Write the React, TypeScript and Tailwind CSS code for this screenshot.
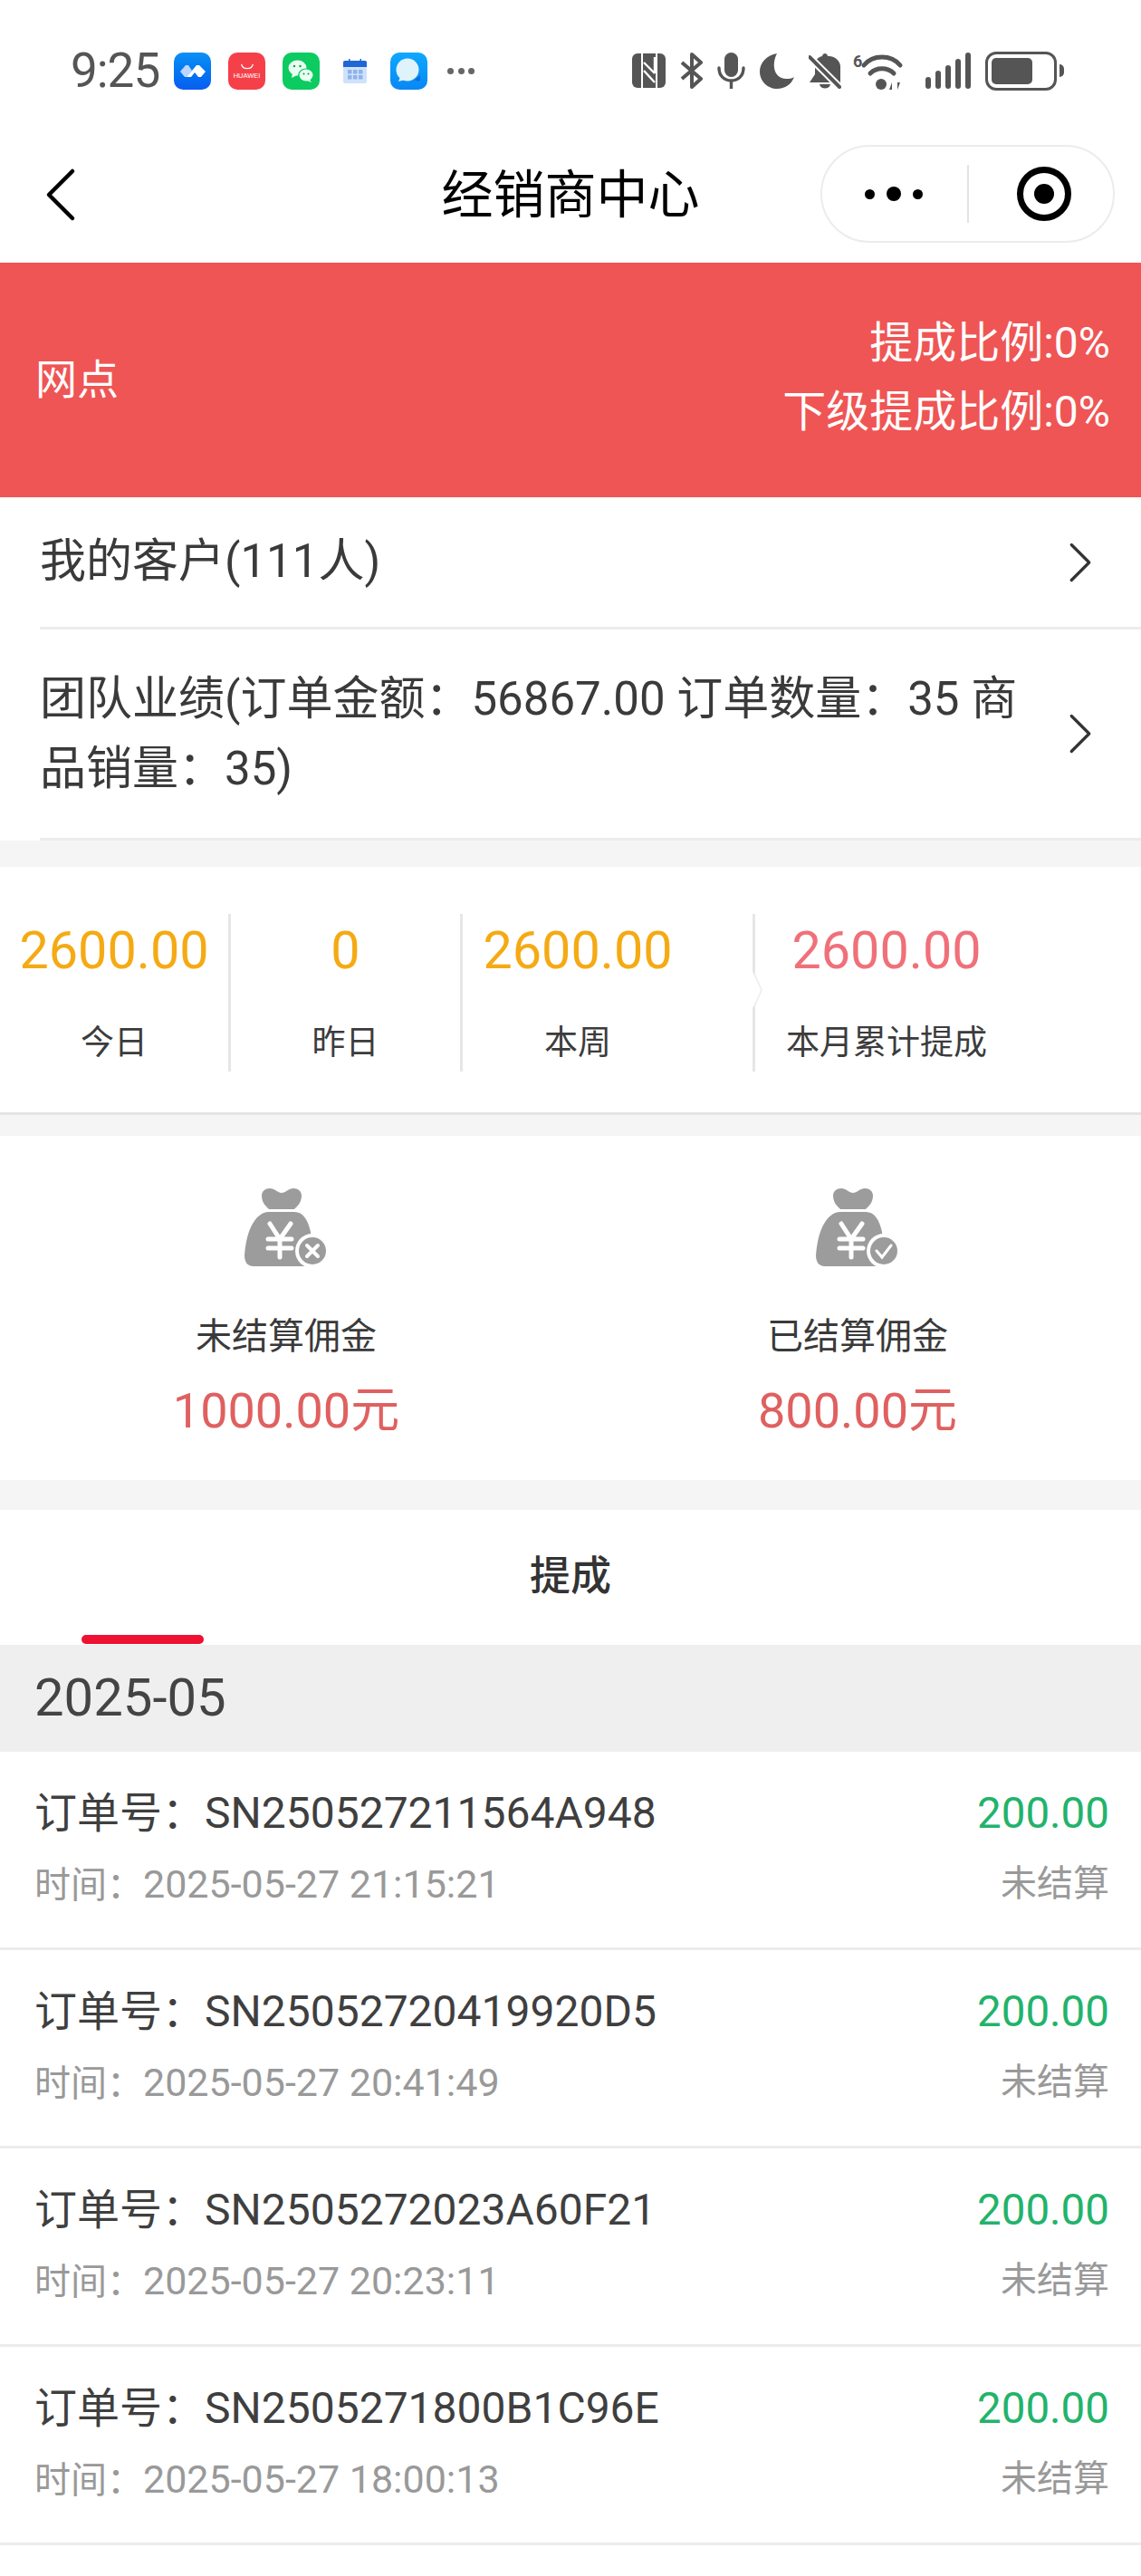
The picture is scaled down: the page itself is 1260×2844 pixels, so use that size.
import { ChevronLeft, ChevronRight } from "lucide-react";

const orders = [
  { no: "SN250527211564A948", time: "2025-05-27 21:15:21" },
  { no: "SN25052720419920D5", time: "2025-05-27 20:41:49" },
  { no: "SN2505272023A60F21", time: "2025-05-27 20:23:11" },
  { no: "SN2505271800B1C96E", time: "2025-05-27 18:00:13" },
];

function AppIcon({ className, children }: { className: string; children?: React.ReactNode }) {
  return (
    <div className={`flex h-[41px] w-[41px] shrink-0 items-center justify-center overflow-hidden rounded-[10px] ${className}`}>
      {children}
    </div>
  );
}

function StatusBar() {
  return (
    <div className="flex h-[140px] items-center pt-[16px] text-[#555]">
      <div className="ml-[78px] w-[100px] text-[53px] leading-none tracking-[-1px]">9:25</div>
      <AppIcon className="ml-[14px] bg-gradient-to-b from-[#0f90f5] to-[#0a5cf0]">
        <svg viewBox="0 0 41 41" className="h-full w-full">
          <path d="M7 21l6-7h3l4 6-6 7h-2z" fill="#bcd6ff" />
          <path d="M14 27l6-7 5-6h3l7 7-5 6h-3l-4-5-4 5z" fill="#fff" />
        </svg>
      </AppIcon>
      <AppIcon className="ml-[19px] flex-col bg-[#f5404a] text-white">
        <svg viewBox="0 0 20 8" className="h-[9px] w-[18px]">
          <path d="M3 1c1 7 13 7 14 0" fill="none" stroke="#fff" strokeWidth="1.4" />
        </svg>
        <span className="mt-[2px] font-['Liberation_Sans',sans-serif] text-[7.5px] leading-none">HUAWEI</span>
      </AppIcon>
      <AppIcon className="ml-[19px] bg-[#0ccb60]">
        <svg viewBox="0 0 41 41" className="h-full w-full">
          <ellipse cx="16.500" cy="17" rx="10" ry="8.500" fill="#e8fff1" />
          <path d="M11 23l-1 5 6-3z" fill="#e8fff1" />
          <ellipse cx="26" cy="25" rx="9" ry="7.500" fill="#0ccb60" />
          <ellipse cx="26" cy="25" rx="7.500" ry="6.500" fill="#e8fff1" />
          <path d="M30 30l2 3-5-2z" fill="#e8fff1" />
          <circle cx="13" cy="15" r="1.200" fill="#0a9a4a" />
          <circle cx="19.500" cy="15" r="1.200" fill="#0a9a4a" />
          <circle cx="23.500" cy="23.500" r="1" fill="#0a9a4a" />
          <circle cx="28.500" cy="23.500" r="1" fill="#0a9a4a" />
        </svg>
      </AppIcon>
      <svg viewBox="0 0 26 27" className="ml-[26px] h-[27px] w-[26px] shrink-0">
        <rect x="0" y="2" width="26" height="25" rx="2" fill="#cfe2fb" />
        <path d="M0 4a2 2 0 012-2h22a2 2 0 012 2v5H0z" fill="#1f66d6" />
        <rect x="6" y="0" width="1.500" height="4" fill="#1f66d6" />
        <rect x="18.500" y="0" width="1.500" height="4" fill="#1f66d6" />
        {[5, 11, 17].map((x) =>
          [12, 18].map((y) => <rect key={`${x}-${y}`} x={x} y={y} width="4.500" height="4.500" fill="#8fb2ea" />)
        )}
      </svg>
      <AppIcon className="ml-[26px] bg-gradient-to-b from-[#10a8ff] to-[#0a87f5]">
        <svg viewBox="0 0 41 41" className="h-full w-full">
          <path d="M33 31c-3 1-5 0-6-1l6-5z" fill="#0b6fd8" />
          <circle cx="19" cy="19" r="12.500" fill="#dff3fb" />
          <path d="M11 27l-2 5 7-2z" fill="#dff3fb" />
        </svg>
      </AppIcon>
      <div className="ml-[22px] flex w-[30px] shrink-0 justify-between">
        <span className="h-[7px] w-[7px] rounded-full bg-[#666]" />
        <span className="h-[7px] w-[7px] rounded-full bg-[#666]" />
        <span className="h-[7px] w-[7px] rounded-full bg-[#666]" />
      </div>

      <svg viewBox="0 0 37 38" className="ml-[174px] h-[38px] w-[37px] shrink-0">
        <rect width="37" height="38" rx="6" fill="#555" />
        <path d="M11 0v38M27 0v38" stroke="#fff" strokeWidth="2" />
        <path d="M13 10l12 12M13 19l12 13M25 4v18" stroke="#fff" strokeWidth="2.400" fill="none" />
      </svg>
      <svg viewBox="0 0 25 40" className="ml-[16px] h-[40px] w-[25px] shrink-0">
        <path d="M2 11l21 18-10 9V2l10 9L2 29" fill="none" stroke="#555" strokeWidth="4" strokeLinejoin="round" />
      </svg>
      <svg viewBox="0 0 31 40" className="ml-[16px] h-[40px] w-[31px] shrink-0">
        <rect x="8" y="0" width="15" height="27" rx="7.500" fill="#555" />
        <path d="M2 17c0 9 6 14 13.500 14S29 26 29 17M15.500 31v9" fill="none" stroke="#555" strokeWidth="3.400" strokeLinecap="round" />
      </svg>
      <svg viewBox="0 0 38 40" className="ml-[16px] h-[40px] w-[38px] shrink-0">
        <path d="M19 1C8 3 0 11 0 21c0 11 9 19 19 19 9 0 16-5 19-13-3 2-6 2-9 2C17 29 12 15 19 1z" fill="#555" />
      </svg>
      <svg viewBox="0 0 36 40" className="ml-[16px] h-[40px] w-[36px] shrink-0">
        <path d="M18 1c-1 0-3 1-3 3-5 1-8 5-8 10v10l-6 9h34V15C35 9 28 3 21 4c0-2-2-3-3-3z" fill="#555" />
        <path d="M12 35h12c-1 6-11 6-12 0z" fill="#555" />
        <path d="M0 4l34 34" stroke="#fff" strokeWidth="8" />
        <path d="M1 5l33 33" stroke="#555" strokeWidth="4" strokeLinecap="round" />
      </svg>
      <svg viewBox="0 0 57 43" className="ml-[13px] h-[43px] w-[57px] shrink-0">
        <text x="0" y="17" fontSize="18" fontWeight="700" fill="#555" fontFamily="Roboto, sans-serif">6</text>
        <path d="M12 15c10-12 30-12 40 0M19 24c7-7 19-7 26 0" fill="none" stroke="#555" strokeWidth="5" strokeLinecap="round" />
        <circle cx="31" cy="36" r="6" fill="#555" />
        <path d="M43 42v-8l-3 8zM49 34v8l3-8z" fill="#555" />
      </svg>
      <div className="ml-[23px] flex h-[40px] w-[50px] shrink-0 items-end justify-between">
        <span className="h-[13px] w-[6px] rounded-full bg-[#555]" />
        <span className="h-[20px] w-[6px] rounded-full bg-[#555]" />
        <span className="h-[26px] w-[6px] rounded-full bg-[#555]" />
        <span className="h-[33px] w-[6px] rounded-full bg-[#555]" />
        <span className="h-[40px] w-[6px] rounded-full bg-[#555]" />
      </div>
      <div className="ml-[16px] flex shrink-0 items-center">
        <div className="h-[43px] w-[79px] rounded-[12px] border-[3px] border-[#555] p-[4px]">
          <div className="h-full w-[45px] rounded-[5px] bg-[#555]" />
        </div>
        <div className="ml-[3px] h-[14px] w-[5px] rounded-r-full bg-[#555]" />
      </div>
    </div>
  );
}

function NavBar() {
  return (
    <div className="relative flex h-[150px] items-center">
      <ChevronLeft className="ml-[15px] h-[104px] w-[104px] text-black" strokeWidth={1.05} />
      <div className="absolute left-0 right-0 text-center text-[57px] leading-none text-black">经销商中心</div>
      <div className="absolute left-[906px] top-[20px] flex h-[108px] w-[325px] items-center rounded-full border-2 border-[#ececec]">
        <div className="ml-[47px] flex w-[64px] items-center justify-between">
          <span className="h-[11px] w-[11px] rounded-full bg-black" />
          <span className="h-[16px] w-[16px] rounded-full bg-black" />
          <span className="h-[11px] w-[11px] rounded-full bg-black" />
        </div>
        <div className="ml-[49px] h-[64px] w-[2px] bg-[#e3e3e3]" />
        <div className="ml-[53px] flex h-[60px] w-[60px] items-center justify-center rounded-full border-[7px] border-black">
          <span className="h-[22px] w-[22px] rounded-full bg-black" />
        </div>
      </div>
    </div>
  );
}

function Bag({ done }: { done?: boolean }) {
  return (
    <svg viewBox="0 0 92 88" className="h-[88px] w-[92px]">
      <path d="M19 8C19 3 23 0 28 0c5 0 9 5 13 5s8-5 13-5c5 0 9 3 9 8 0 8-5 12-8 15H27c-3-3-8-7-8-15z" fill="#9c9c9c" />
      <path d="M27 26h28c10 0 15 9 18 22l3 26c0 8-3 12-9 12H10C3 86 0 81 0 74c1-14 4-27 9-35 4-7 10-13 18-13z" fill="#9c9c9c" />
      <path d="M28 39l11 17 12-17M39 56v20M26 56h26M26 66h26" fill="none" stroke="#fff" strokeWidth="5" strokeLinecap="round" />
      <circle cx="75" cy="69" r="19" fill="#fff" />
      <circle cx="75" cy="69" r="15" fill="#9c9c9c" />
      {done ? (
        <path d="M67 69l6 7 10-13" fill="none" stroke="#fff" strokeWidth="3" strokeLinecap="round" />
      ) : (
        <path d="M69 63l12 12M81 63L69 75" fill="none" stroke="#fff" strokeWidth="4" strokeLinecap="round" />
      )}
    </svg>
  );
}

function Stat({ value, label, className }: { value: string; label: string; className: string }) {
  return (
    <div className={`flex h-[174px] flex-col items-center border-r-[3px] border-[#e6e6e6] ${className}`}>
      <div className="mt-[14px] text-[57.5px] leading-[54px] text-[#f5aa14]">{value}</div>
      <div className="mt-[50px] text-[37px] leading-[50px] text-[#3c3c3c]">{label}</div>
    </div>
  );
}

export default function App() {
  return (
    <div className="h-[2844px] w-[1260px] overflow-hidden bg-white font-['Roboto','Noto_Sans_CJK_SC',sans-serif]">
      <StatusBar />
      <NavBar />

      <div className="flex h-[259px] items-center justify-between bg-[#ef5554] pl-[39px] pr-[34px] text-white">
        <div className="text-[46px]">网点</div>
        <div className="pb-[6px] text-right text-[48px] leading-[76px]">
          <div>提成比例:0%</div>
          <div>下级提成比例:0%</div>
        </div>
      </div>

      <div className="bg-white pl-[44px]">
        <div className="flex h-[146px] items-center justify-between border-b-[3px] border-[#ececec] pr-[28px] text-[51px] text-[#3a3a3a]">
          <span>我的客户(111人)</span>
          <ChevronRight className="h-[78px] w-[78px] text-[#333]" strokeWidth={1} />
        </div>
        <div className="flex h-[233px] items-center justify-between border-b-[3px] border-[#ececec] pr-[28px] text-[51px] leading-[77px] text-[#3a3a3a]">
          <span className="w-[1090px]">团队业绩(订单金额：56867.00 订单数量：35 商品销量：35)</span>
          <ChevronRight className="h-[78px] w-[78px] shrink-0 text-[#333]" strokeWidth={1} />
        </div>
      </div>

      <div className="h-[29px] bg-[#f5f5f5]" />

      <div className="flex h-[274px] items-center border-b-[3px] border-[#e4e4e4] bg-white pt-[6px]">
        <Stat value="2600.00" label="今日" className="w-[255px]" />
        <Stat value="0" label="昨日" className="w-[256px]" />
        <Stat value="2600.00" label="本周" className="w-[323px] pr-[66px]" />
        <div className="relative flex h-[174px] flex-col items-center pl-[34px]">
          <svg viewBox="0 0 12 40" className="absolute left-[-3px] top-[64px] h-[40px] w-[12px]">
            <path d="M0 0l10 20L0 40z" fill="#fff" />
            <path d="M2 2l8 18-8 18" fill="none" stroke="#ececec" strokeWidth="1.500" />
          </svg>
          <div className="mt-[14px] text-[57.5px] leading-[54px] text-[#f0707a]">2600.00</div>
          <div className="mt-[50px] text-[37px] leading-[50px] text-[#3c3c3c]">本月累计提成</div>
        </div>
      </div>

      <div className="h-[23px] bg-[#f5f5f5]" />

      <div className="grid h-[380px] grid-cols-2 bg-white">
        <div className="flex flex-col items-center pl-[2px] pt-[58px]">
          <Bag />
          <div className="mt-[51px] text-[40px] leading-[50px] text-[#3a3a3a]">未结算佣金</div>
          <div className="mt-[30px] text-[54px] leading-[54px] text-[#e06060]">1000.00元</div>
        </div>
        <div className="flex flex-col items-center pl-[4px] pt-[58px]">
          <Bag done />
          <div className="mt-[51px] text-[40px] leading-[50px] text-[#3a3a3a]">已结算佣金</div>
          <div className="mt-[30px] text-[54px] leading-[54px] text-[#e06060]">800.00元</div>
        </div>
      </div>

      <div className="h-[33px] bg-[#f5f5f5]" />

      <div className="h-[149px] bg-white">
        <div className="pt-[44px] text-center text-[45px] font-medium leading-[60px] text-[#333]">提成</div>
        <div className="ml-[90px] mt-[34px] h-[10px] w-[135px] rounded-full bg-[#ee1131]" />
      </div>

      <div className="flex h-[118px] items-center bg-[#efefef] pb-[2px] pl-[38px] text-[58px] text-[#444]">2025-05</div>

      {orders.map((o) => (
        <div key={o.no} className="flex h-[219px] items-start justify-between border-b-[3px] border-[#ececec] bg-white pl-[38px] pr-[35px] pt-[38px]">
          <div>
            <div className="text-[47px] leading-[60px] text-[#3f3f3f]">
              订单号：<span className="text-[48px]">{o.no}</span>
            </div>
            <div className="mt-[18px] text-[40px] leading-[60px] text-[#999]">
              时间：<span className="text-[43px]">{o.time}</span>
            </div>
          </div>
          <div className="text-right">
            <div className="text-[47.5px] leading-[60px] text-[#22b36b]">200.00</div>
            <div className="mt-[18px] text-[40px] leading-[60px] text-[#999]">未结算</div>
          </div>
        </div>
      ))}
    </div>
  );
}
